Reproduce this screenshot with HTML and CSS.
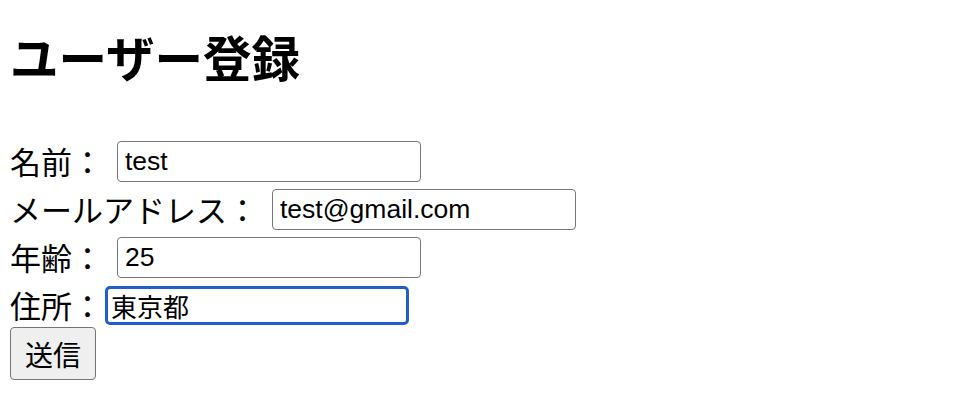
FILE: index.html
```html
<!DOCTYPE html>
<html lang="ja">
<head>
<meta charset="utf-8">
<title>ユーザー登録</title>
<link rel="stylesheet" href="styles.css">
</head>
<body>
<h1 class="title">ユーザー登録</h1>
<form class="form">
  <div class="row"><label class="label">名前：</label><input class="field sp" type="text" value="test"></div>
  <div class="row"><label class="label">メールアドレス：</label><input class="field sp" type="text" value="test@gmail.com"></div>
  <div class="row"><label class="label">年齢：</label><input class="field sp" type="text" value="25"></div>
  <div class="row"><label class="label">住所：</label><input class="field focus cjk" type="text" value="東京都"></div>
  <button class="submit" type="button">送信</button>
</form>
</body>
</html>
```
FILE: styles.css
```css
html, body {
  background: #fff;
}
body {
  margin: 0;
  padding: 0 10px;
  font-family: "Noto Sans CJK JP", sans-serif;
  color: #000;
}
.title {
  margin: 26px 0 51px;
  font-size: 48.5px;
  line-height: 60px;
  font-weight: 700;
}
.form {
  display: flex;
  flex-direction: column;
  align-items: flex-start;
}
.row {
  display: flex;
  align-items: center;
  height: 48px;
}
.label {
  font-size: 31px;
  line-height: 48px;
}
.field {
  box-sizing: border-box;
  width: 304px;
  height: 41px;
  margin-left: 2px;
  padding: 0 7px;
  border: 1.5px solid #767676;
  border-radius: 4px;
  font-family: "Liberation Sans", Arial, sans-serif;
  font-size: 26.5px;
  color: #000;
  background: #fff;
  outline: none;
}
.sp {
  margin-left: 14px;
}
.focus {
  height: 39px;
  padding: 0 3px;
  border: 3px solid #1f5fcc;
  border-radius: 5px;
}
.cjk {
  font-family: "Noto Sans CJK JP", sans-serif;
  font-size: 26px;
}
.submit {
  box-sizing: border-box;
  width: 86px;
  height: 53px;
  margin-top: -2px;
  padding: 0;
  font-family: "Noto Sans CJK JP", sans-serif;
  font-size: 28px;
  color: #000;
  background: #efefef;
  border: 1.5px solid #767676;
  border-radius: 4px;
}
```
